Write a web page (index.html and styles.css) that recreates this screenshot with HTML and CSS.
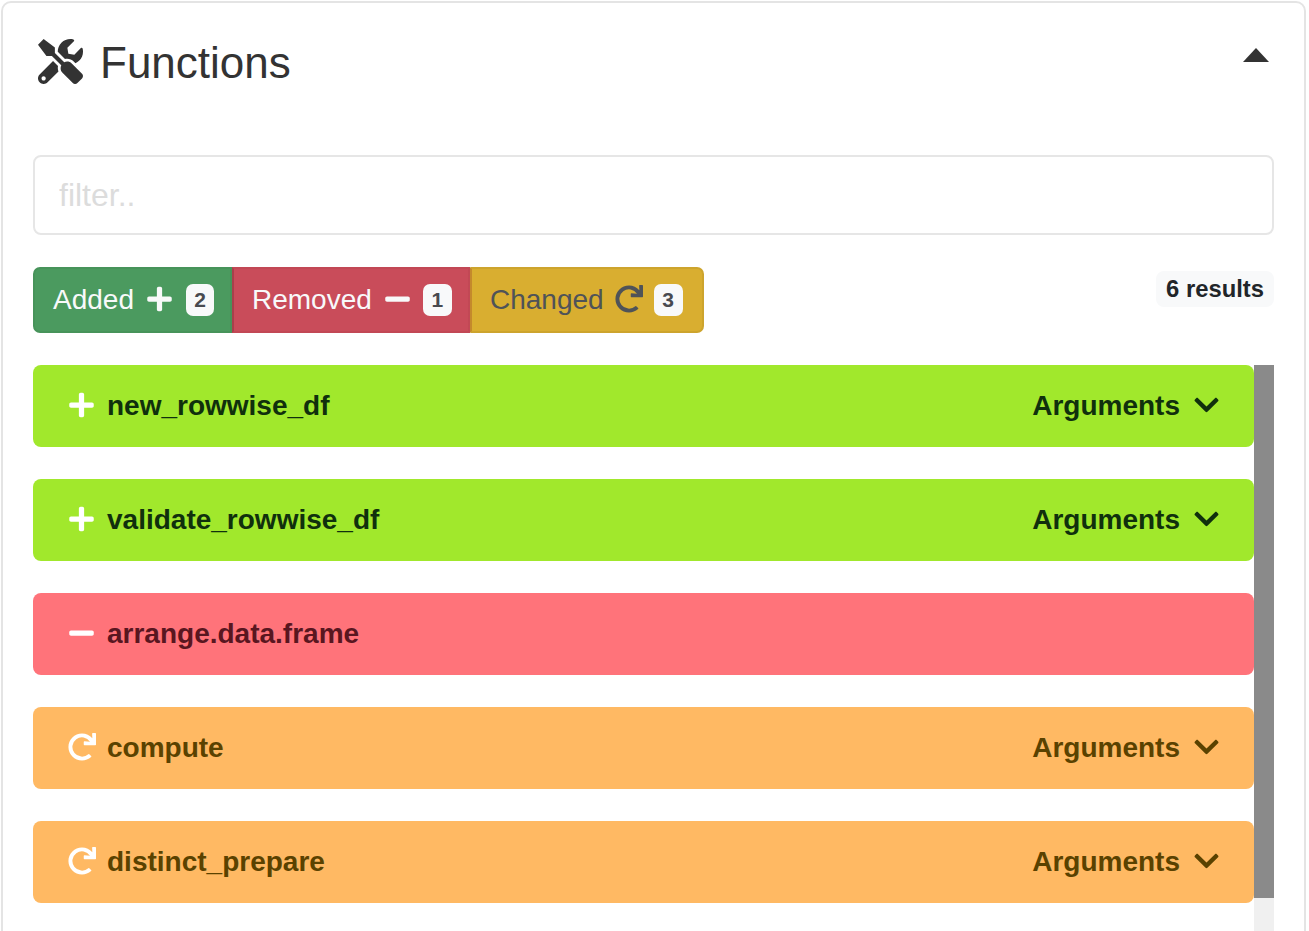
FILE: index.html
```html
<!DOCTYPE html>
<html>

<head>
    <meta charset="utf-8">
    <title>Functions</title>
    <link rel="stylesheet" href="styles.css">
</head>

<body>
    <svg class="defs" xmlns="http://www.w3.org/2000/svg">
        <symbol id="i-tools" viewBox="0 0 512 512">
            <path d="M501.1 395.7L384 278.6c-23.1-23.1-57.6-27.6-85.4-13.9L192 158.1V96L64 0 0 64l96 128h62.1l106.6 106.6c-13.6 27.8-9.2 62.3 13.9 85.4l117.1 117.1c14.6 14.6 38.2 14.6 52.7 0l52.7-52.7c14.5-14.6 14.5-38.2 0-52.7zM331.7 225c28.3 0 54.9 11 74.9 31l19.4 19.4c15.8-6.9 30.8-16.5 43.8-29.5 37.1-37.1 49.7-89.3 37.9-136.7-2.2-9-13.5-12.1-20.1-5.5l-74.4 74.4-67.9-11.3L334 98.9l74.4-74.4c6.6-6.6 3.4-17.9-5.7-20.2-47.4-11.7-99.6.9-136.6 37.9-28.5 28.5-41.9 66.1-41.2 103.6l82.1 82.1c8.1-1.9 16.5-2.9 24.7-2.9zm-103.9 82l-56.7-56.7L18.7 402.8c-25 25-25 65.5 0 90.5s65.5 25 90.5 0l123.6-123.6c-7.6-19.9-9.9-41.6-5-62.7zM64 472c-13.2 0-24-10.8-24-24 0-13.3 10.7-24 24-24s24 10.7 24 24c0 13.2-10.8 24-24 24z"/>
        </symbol>
        <symbol id="i-plus" viewBox="0 0 448 512">
            <path d="M416 208H272V64c0-17.67-14.33-32-32-32h-32c-17.67 0-32 14.33-32 32v144H32c-17.67 0-32 14.33-32 32v32c0 17.67 14.33 32 32 32h144v144c0 17.67 14.33 32 32 32h32c17.67 0 32-14.33 32-32V304h144c17.67 0 32-14.33 32-32v-32c0-17.67-14.33-32-32-32z"/>
        </symbol>
        <symbol id="i-minus" viewBox="0 0 448 512">
            <path d="M416 208H32c-17.67 0-32 14.33-32 32v32c0 17.67 14.33 32 32 32h384c17.67 0 32-14.33 32-32v-32c0-17.67-14.33-32-32-32z"/>
        </symbol>
        <symbol id="i-redo" viewBox="0 0 512 512">
            <path d="M500.33 0h-47.41a12 12 0 0 0-12 12.57l4 82.76A247.42 247.42 0 0 0 256 8C119.34 8 7.9 119.53 8 256.19 8.1 393.07 119.1 504 256 504a247.1 247.1 0 0 0 166.18-63.91 12 12 0 0 0 .48-17.43l-34-34a12 12 0 0 0-16.38-.55A176 176 0 1 1 402.1 157.8l-101.53-4.87a12 12 0 0 0-12.57 12v47.41a12 12 0 0 0 12 12h200.33a12 12 0 0 0 12-12V12a12 12 0 0 0-12-12z"/>
        </symbol>
        <symbol id="i-chevron" viewBox="0 0 448 512">
            <path d="M207.029 381.476L12.686 187.132c-9.373-9.373-9.373-24.569 0-33.941l22.667-22.667c9.357-9.357 24.522-9.375 33.901-.04L224 284.505l154.745-154.021c9.379-9.335 24.544-9.317 33.901.04l22.667 22.667c9.373 9.373 9.373 24.569 0 33.941L240.971 381.476c-9.373 9.372-24.569 9.372-33.942 0z"/>
        </symbol>
    </svg>

    <div class="card">
        <div class="card-head">
            <h2 class="title">
                <svg class="title-icon"><use href="#i-tools"></use></svg>
                Functions
            </h2>
            <span class="caret"></span>
        </div>

        <input class="filter" type="text" placeholder="filter..">

        <div class="toolbar">
            <div class="btn-group">
                <button class="btn btn-added">
                    Added
                    <svg class="icon"><use href="#i-plus"></use></svg>
                    <span class="count">2</span>
                </button>
                <button class="btn btn-removed">
                    Removed
                    <svg class="icon"><use href="#i-minus"></use></svg>
                    <span class="count">1</span>
                </button>
                <button class="btn btn-changed">
                    Changed
                    <svg class="icon icon-redo"><use href="#i-redo"></use></svg>
                    <span class="count">3</span>
                </button>
            </div>
            <span class="results">6 results</span>
        </div>

        <div class="list-wrap">
            <div class="list">
                <div class="row row-added">
                    <span class="row-icon"><svg class="icon"><use href="#i-plus"></use></svg></span>
                    <span class="row-name">new_rowwise_df</span>
                    <span class="row-args">Arguments <svg class="icon"><use href="#i-chevron"></use></svg></span>
                </div>
                <div class="row row-added">
                    <span class="row-icon"><svg class="icon"><use href="#i-plus"></use></svg></span>
                    <span class="row-name">validate_rowwise_df</span>
                    <span class="row-args">Arguments <svg class="icon"><use href="#i-chevron"></use></svg></span>
                </div>
                <div class="row row-removed">
                    <span class="row-icon"><svg class="icon"><use href="#i-minus"></use></svg></span>
                    <span class="row-name">arrange.data.frame</span>
                </div>
                <div class="row row-changed">
                    <span class="row-icon"><svg class="icon icon-redo"><use href="#i-redo"></use></svg></span>
                    <span class="row-name">compute</span>
                    <span class="row-args">Arguments <svg class="icon"><use href="#i-chevron"></use></svg></span>
                </div>
                <div class="row row-changed">
                    <span class="row-icon"><svg class="icon icon-redo"><use href="#i-redo"></use></svg></span>
                    <span class="row-name">distinct_prepare</span>
                    <span class="row-args">Arguments <svg class="icon"><use href="#i-chevron"></use></svg></span>
                </div>
            </div>
            <div class="scrollbar">
                <div class="scrollbar-thumb"></div>
            </div>
        </div>
    </div>
</body>

</html>
```

FILE: styles.css
```css
html,
body {
    height: 100%;
    overflow: hidden;
}

body {
    box-sizing: border-box;
    margin: 0;
    padding: 1px 3px 0 1px;
    font-family: "Liberation Sans", Arial, sans-serif;
    font-size: 28px;
    color: #333;
    background: #fff;
}

.defs {
    display: none;
}

.card {
    box-sizing: border-box;
    height: 960px;
    border: 2px solid #e4e4e4;
    border-radius: 10px;
    padding: 30px;
    background: #fff;
}

.card-head {
    display: flex;
    justify-content: space-between;
    align-items: center;
    height: 60px;
    margin-bottom: 62px;
}

.title {
    display: flex;
    align-items: center;
    margin: 0;
    font-size: 44px;
    font-weight: normal;
    color: #333;
}

.title-icon {
    width: 45px;
    height: 45px;
    margin: 0 17px 4px 5px;
    fill: #333;
}

.caret {
    width: 0;
    height: 0;
    margin: 0 5px 17px 0;
    border-left: 13px solid transparent;
    border-right: 13px solid transparent;
    border-bottom: 14px solid #333;
}

.filter {
    display: block;
    box-sizing: border-box;
    width: 100%;
    height: 80px;
    padding: 0 24px;
    border: 2px solid #e6e6e6;
    border-radius: 8px;
    font-family: inherit;
    font-size: 32px;
    outline: none;
}

.filter::placeholder {
    color: #dcdcdc;
}

.toolbar {
    display: flex;
    justify-content: space-between;
    align-items: flex-start;
    margin: 32px 0;
}

.btn-group {
    display: flex;
}

.btn {
    display: flex;
    align-items: center;
    box-sizing: border-box;
    height: 66px;
    padding: 0 18px;
    border: 2px solid;
    font-family: inherit;
    font-size: 28px;
}

.btn .icon {
    margin: 0 0 2px 13px;
}

.btn .count {
    margin-left: 13px;
}

.btn .icon-redo {
    margin-left: 11px;
}

.btn .icon-redo + .count {
    margin-left: 11px;
}

.btn-added {
    width: 199px;
    background: #4b9a5f;
    border-color: #47935a;
    border-radius: 7px 0 0 7px;
    color: #f8f9fa;
}

.btn-added .count {
    width: 28px;
    margin-left: 14px;
}

.btn-removed {
    width: 238px;
    background: #c94c5a;
    border-color: #c24855;
    border-left-color: #a8404b;
    color: #f8f9fa;
}

.btn-changed {
    width: 234px;
    background: #d9ae30;
    border-color: #cda42d;
    border-left-color: #c4892c;
    border-radius: 0 7px 7px 0;
    color: #4f5358;
}

.icon {
    flex: none;
    width: 25px;
    height: 28px;
    fill: currentColor;
}

.icon-redo {
    width: 28px;
}

.count {
    flex: none;
    width: 29px;
    height: 32px;
    border-radius: 7px;
    background: #f8f9fa;
    color: #484a50;
    font-size: 21px;
    font-weight: bold;
    line-height: 32px;
    text-align: center;
}

.results {
    margin-top: 4px;
    padding: 0 10px;
    border-radius: 8px;
    background: #f8f9fa;
    color: #212529;
    font-size: 23.8px;
    font-weight: bold;
    line-height: 36px;
}

.list-wrap {
    display: flex;
    height: 604px;
    overflow: hidden;
}

.list {
    flex: 1;
    display: flex;
    flex-direction: column;
    gap: 32px;
}

.scrollbar {
    flex: none;
    width: 20px;
    background: #f0f0f0;
}

.scrollbar-thumb {
    height: 533px;
    background: #8a8a8a;
}

.row {
    display: flex;
    align-items: center;
    box-sizing: border-box;
    height: 82px;
    padding: 0 35.5px 0 31px;
    border-radius: 8px;
    font-weight: bold;
}

.row-added {
    background: #a1e82c;
    color: #10300d;
}

.row-removed {
    background: #ff737a;
    color: #591620;
}

.row-changed {
    background: #ffb963;
    color: #5a4200;
}

.row-icon {
    display: flex;
    justify-content: center;
    flex: none;
    width: 35px;
    margin: 0 8px 2px 0;
    color: #fff;
}

.row-name {
    flex: 1;
}

.row-args {
    display: flex;
    align-items: center;
    gap: 13.5px;
}

.row-args .icon {
    margin-bottom: 3px;
}
```
